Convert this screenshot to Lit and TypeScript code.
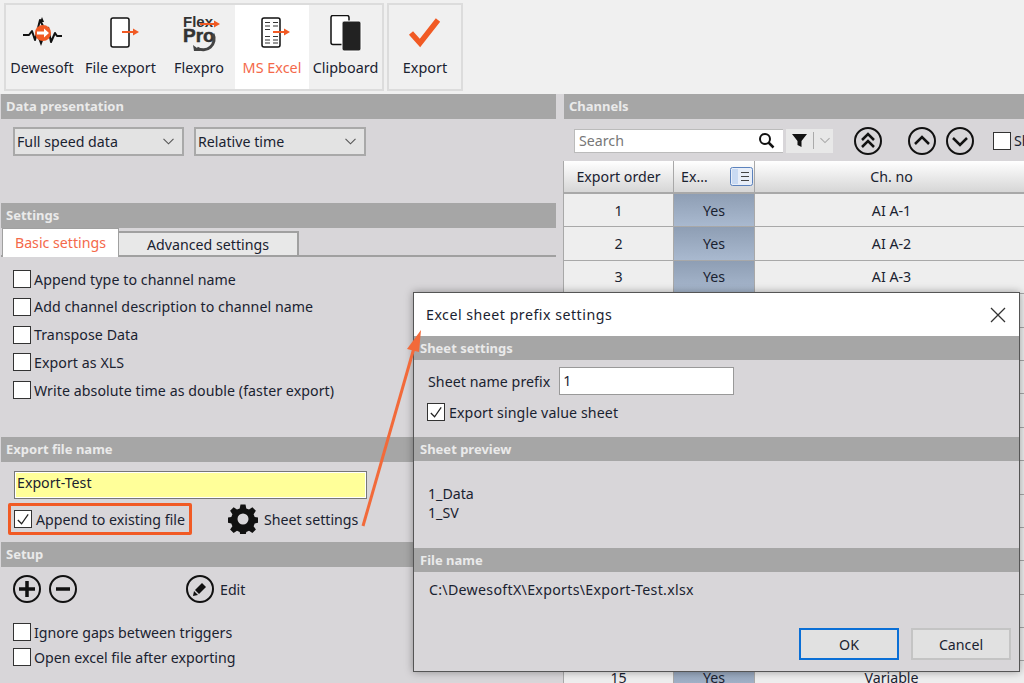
import { LitElement, html, css, svg } from "lit";
import { customElement } from "lit/decorators.js";

const orange = "#f15a24";

const arrowIcon = (x: number, y: number, len = 16) => svg`<path d="M${x} ${y}h${len - 5}" stroke="${orange}" stroke-width="2" fill="none"/><path d="M${x + len - 6} ${y - 3.5}l6 3.5l-6 3.5z" fill="${orange}"/>`;

const icons: Record<string, unknown> = {
  dewe: html`<svg width="44" height="36" viewBox="0 0 44 36"><path d="M3 19h6l3-4 3 9 5-20 4 8M28 11l3 15 4-9 2 3h5" stroke="#111" stroke-width="2" fill="none" stroke-linejoin="round"/><path d="M18 22l3 8 3-8M20 6l2-5 2 5" fill="#111"/><circle cx="23" cy="17" r="8" fill="${orange}"/><path d="M17 15.500h7v-3l5 4.500-5 4.500v-3h-7z" fill="#fff"/></svg>`,
  file: html`<svg width="44" height="36" viewBox="0 0 44 36"><rect x="12" y="2" width="18" height="29" rx="2" fill="#fff" stroke="#111" stroke-width="1.500"/>${arrowIcon(23, 16, 17)}</svg>`,
  flex: html`<svg width="44" height="40" viewBox="0 0 44 40"><text x="6" y="13" class="logo">Flex</text><text x="6" y="28" class="logo big">Pro</text><path d="M36 20a11 11 0 0 1-16 14" fill="none" stroke="#444" stroke-width="3"/><path d="M16 31l8 6h-7z" fill="#444"/>${arrowIcon(23, 10, 20)}</svg>`,
  excel: html`<svg width="44" height="36" viewBox="0 0 44 36"><rect x="12" y="2" width="18" height="29" rx="2" fill="#fff" stroke="#111" stroke-width="1.500"/><path d="M15 6.500h5M23 6.500h5M15 10h5M23 10h5M15 13.500h5M15 24h5M23 24h5M15 27h5M23 27h5M15 20.500h5M23 20.500h5" stroke="#333" stroke-width="1.200"/>${arrowIcon(23, 16, 17)}</svg>`,
  clip: html`<svg width="44" height="38" viewBox="0 0 44 38"><rect x="7" y="0.500" width="18" height="29" rx="2" fill="#fff" stroke="#111" stroke-width="1.500"/><rect x="18" y="6" width="19" height="30" rx="2" fill="#222" stroke="#fff" stroke-width="1"/></svg>`,
  check: html`<svg width="44" height="36" viewBox="0 0 44 36"><path d="M8 17l9 10L35 4" stroke="${orange}" stroke-width="5.500" fill="none"/></svg>`,
};

const circleIcon = (inner: unknown) => html`<svg class="circ" width="30" height="30" viewBox="0 0 30 30"><circle cx="15" cy="15" r="13" fill="none" stroke="#111" stroke-width="2"/>${inner}</svg>`;
const chev = (d: string) => svg`<path d="${d}" fill="none" stroke="#111" stroke-width="2.500"/>`;
const chevron = html`<svg class="chev" width="11" height="7" viewBox="0 0 11 7"><path d="M.5.800l5 5 5-5" fill="none" stroke="#555" stroke-width="1.100"/></svg>`;

const cb = (label: string, checked = false) => html`<label class="cb"><span class="box">${checked ? html`<svg width="17" height="17" viewBox="0 0 17 17"><path d="M3 9l4 4 7-10" fill="none" stroke="#222" stroke-width="1.300"/></svg>` : ""}</span><span>${label}</span></label>`;

const rows = ["AI A-1", "AI A-2", "AI A-3", "", "", "", "", "", "", "", "", "", "", "", "Variable"];

@customElement("app-root")
export class AppRoot extends LitElement {
  static styles = css`
    :host { display: block; width: 1024px; height: 683px; position: relative; overflow: hidden; background: #d8d6d9; font-family: "Noto Sans", "Open Sans", sans-serif; font-size: 14.2px; color: #1a2230; }
    * { box-sizing: border-box; }
    .toolbar { height: 94px; background: #f0f0f0; display: flex; gap: 3px; padding: 3px 0 0 4px; }
    .group { display: flex; height: 88px; border: 2px solid #dcdcdc; }
    .tool { display: flex; flex-direction: column; align-items: center; padding-top: 4px; white-space: nowrap; font-size: 14.400px; }
    .w72 { width: 72px; }
    .w85 { width: 85px; }
    .w73 { width: 73px; }
    .w74 { width: 74px; }
    .tool.on { background: #fff; color: #f4694a; }
    .tool .ic { height: 49px; display: flex; align-items: center; justify-content: center; }
    .logo { font: 700 15px "Liberation Sans", sans-serif; fill: #333; }
    .logo.big { font-size: 19px; font-weight: 700; stroke: #333; stroke-width: .5px; }
    .main { display: flex; }
    .left { width: 556px; flex: none; padding-left: 1px; }
    .right { flex: 1; margin-left: 8px; min-width: 0; }
    .head { height: 25px; background: #a6a6a6; color: #eaeaea; font-weight: 700; font-size: 13px; line-height: 25px; padding-left: 5px; white-space: nowrap; }
    .sec1 { height: 109px; }
    .sec2 { height: 234px; }
    .sec3 { height: 105px; }
    .selects { display: flex; gap: 10px; padding: 8px 0 0 12px; }
    .select { height: 29px; width: 172px; border: 2px solid #a9a9a9; background: #e3e3e3; display: flex; align-items: center; justify-content: space-between; padding: 0 8px 0 2px; }
    .select.first { width: 171px; }
    .tabs { display: flex; align-items: flex-end; height: 29px; border-bottom: 2px solid #a0a0a0; padding-left: 1px; }
    .tab { width: 117px; height: 29px; background: #fff; border: 1px solid #a0a0a0; border-bottom: 0; color: #f4694a; text-align: center; line-height: 27px; margin-bottom: -2px; }
    .tab.off { width: 180px; height: 24px; background: #e8e8e8; color: #1a2230; border: 2px solid #a0a0a0; border-left: 0; border-bottom: 0; line-height: 24px; margin-bottom: 0; }
    .checks { display: flex; flex-direction: column; gap: 9.750px; padding: 13px 0 0 12px; letter-spacing: .06px; }
    .cb { display: flex; align-items: center; gap: 3px; height: 18px; white-space: nowrap; }
    .box { width: 18px; height: 18px; flex: none; background: #fff; border: 1px solid #333; display: flex; align-items: center; justify-content: center; }
    .name { margin: 9px 0 0 13px; width: 353px; height: 28px; border: 2px solid #fff; outline: 1px solid #777; outline-offset: -1px; background: #ffff99; line-height: 20px; padding-left: 1px; }
    .name-row { display: flex; align-items: center; margin-top: 4px; padding-left: 7px; height: 32px; }
    .mark { height: 32px; width: 184px; border: 3px solid #f15a24; border-radius: 2px; display: flex; align-items: center; padding-left: 3px; }
    .mark .cb { gap: 4px; }
    .sheet { display: flex; align-items: center; gap: 6px; margin-left: 36px; }
    .setup-icons { display: flex; align-items: center; padding: 7px 0 0 11px; gap: 6px; }
    .edit { display: flex; align-items: center; gap: 5px; margin-left: 101px; }
    .setup-checks { display: flex; flex-direction: column; gap: 7px; padding: 19px 0 0 12px; }
    .search-row { display: flex; align-items: center; height: 42px; padding: 1px 0 0 10px; white-space: nowrap; }
    .search { flex: none; width: 209px; height: 24px; background: #fff; border: 1px solid #bbb; border-right: 0; display: flex; align-items: center; justify-content: space-between; padding: 0 8px 0 4px; color: #777; }
    .filter { flex: none; width: 47px; height: 24px; margin-left: 3px; background: #e8e8e8; display: flex; align-items: center; gap: 6px; padding-left: 6px; }
    .filter i { width: 1px; height: 17px; background: #aaa; }
    .nav1, .nav2, .nav3, .show { flex: none; display: flex; }
    .nav1 { margin-left: 20px; }
    .nav2 { margin-left: 24px; }
    .nav3 { margin-left: 8px; }
    .show { margin-left: 18px; }
    .tbl-wrap { background: #a8a8a8; margin: 0 -4px 0 -1px; padding-left: 1px; }
    .table { display: grid; grid-template-columns: 109px 80px 1fr; gap: 1px; }
    .th { height: 31px; margin-bottom: 1px; background: linear-gradient(#fff, #d6d6d6); display: flex; align-items: center; justify-content: center; }
    .th.ex { justify-content: space-between; padding: 0 1px 0 7px; }
    .td { height: 32.400px; background: #eee; display: flex; align-items: center; justify-content: center; }
    .td.yes { background: linear-gradient(#8e9eb4, #a9b9cf); }
    .arrow { position: absolute; left: 0; top: 0; pointer-events: none; z-index: 3; }
    .dialog { position: absolute; z-index: 2; left: 413px; top: 292px; width: 607px; height: 380px; border: 1px solid #555; background: #d8d6d9; box-shadow: 0 0 8px rgba(0,0,0,.35); font-size: 14.2px; }
    .title { height: 43px; background: #fff; display: flex; align-items: center; justify-content: space-between; padding: 0 13px 0 12px; letter-spacing: .5px; }
    .dialog .head { height: 24px; line-height: 24px; padding-left: 6px; }
    .prefix { display: flex; align-items: center; gap: 9px; padding: 7px 0 0 14px; letter-spacing: .05px; }
    .pinput { width: 175px; height: 28px; background: #fff; border: 1px solid #999; line-height: 26px; padding-left: 3px; }
    .dialog .cb { margin: 8px 0 0 13px; gap: 4px; letter-spacing: .1px; }
    .gap1 { height: 16px; }
    .preview { height: 87px; padding: 23px 0 0 14px; line-height: 19px; }
    .path { height: 56px; padding: 8px 0 0 15px; line-height: 20px; letter-spacing: .3px; }
    .btns { display: flex; justify-content: flex-end; gap: 12px; padding-right: 8px; }
    .btn { width: 100px; height: 32px; background: #e1e1e1; border: 2px solid #c4c4c4; display: flex; align-items: center; justify-content: center; }
    .btn.pri { border-color: #0a6fd6; }
  `;

  render() {
    const tool = (name: string, icon: string, cls = "") => html`<div class="tool ${cls}"><div class="ic">${icons[icon]}</div><div>${name}</div></div>`;
    return html`
      <div class="toolbar">
        <div class="group">${tool("Dewesoft", "dewe", "w72")}${tool("File export", "file", "w85")}${tool("Flexpro", "flex", "w72")}${tool("MS Excel", "excel", "w74 on")}${tool("Clipboard", "clip", "w73")}</div>
        <div class="group">${tool("Export", "check", "w72")}</div>
      </div>
      <div class="main">
        <div class="left">
          <div class="sec1"><div class="head">Data presentation</div>
            <div class="selects"><div class="select first">Full speed data${chevron}</div><div class="select">Relative time${chevron}</div></div>
          </div>
          <div class="sec2"><div class="head">Settings</div>
            <div class="tabs"><div class="tab">Basic settings</div><div class="tab off">Advanced settings</div></div>
            <div class="checks">${cb("Append type to channel name")}${cb("Add channel description to channel name")}${cb("Transpose Data")}${cb("Export as XLS")}${cb("Write absolute time as double (faster export)")}</div>
          </div>
          <div class="sec3"><div class="head">Export file name</div>
            <div class="name">Export-Test</div>
            <div class="name-row"><div class="mark">${cb("Append to existing file", true)}</div>
              <div class="sheet"><svg width="30" height="30" viewBox="0 0 30 30"><path fill="#111" fill-rule="evenodd" d="M12.500 1h5l.8 4 2.700 1.100 3.400-2.300 3.500 3.500-2.300 3.400 1.100 2.700 4 .8v5l-4 .8-1.100 2.700 2.300 3.400-3.500 3.500-3.400-2.300-2.700 1.100-.8 4h-5l-.8-4-2.700-1.100-3.400 2.300-3.500-3.500 2.300-3.400-1.100-2.700-4-.8v-5l4-.8 1.100-2.700-2.300-3.400 3.500-3.500 3.400 2.300 2.700-1.100zM15 10a5.500 5.500 0 1 0 0 11 5.500 5.500 0 0 0 0-11z" transform="translate(0 -.5)"/></svg><span>Sheet settings</span></div>
            </div>
          </div>
          <div><div class="head">Setup</div>
            <div class="setup-icons">
              ${circleIcon(svg`<path d="M7 15h16M15 7v16" stroke="#111" stroke-width="3.500"/>`)}
              ${circleIcon(svg`<path d="M8 15h14" stroke="#111" stroke-width="3.500"/>`)}
              <div class="edit">${circleIcon(svg`<path d="M10 16l7-7 4 4-7 7z" fill="#111"/><path d="M9 17l4 4-5 1z" fill="#111"/>`)}<span>Edit</span></div>
            </div>
            <div class="setup-checks">${cb("Ignore gaps between triggers")}${cb("Open excel file after exporting")}</div>
          </div>
        </div>
        <div class="right">
          <div class="head">Channels</div>
          <div class="search-row">
            <div class="search"><span>Search</span><svg width="17" height="17" viewBox="0 0 17 17"><circle cx="7" cy="7" r="5" fill="none" stroke="#111" stroke-width="2"/><path d="M10.500 10.500l5 5" stroke="#111" stroke-width="2.500"/></svg></div>
            <div class="filter"><svg width="15" height="15" viewBox="0 0 15 15"><path d="M0 1h15L9.500 8v6l-4-2V8z" fill="#111"/></svg><i></i><svg width="10" height="7" viewBox="0 0 11 7"><path d="M.5.800l5 5 5-5" fill="none" stroke="#aaa" stroke-width="1.200"/></svg></div>
            <span class="nav1">${circleIcon(chev("M9 14l6-6 6 6M9 21l6-6 6 6"))}</span>
            <span class="nav2">${circleIcon(chev("M8 18l7-7 7 7"))}</span>
            <span class="nav3">${circleIcon(chev("M8 12l7 7 7-7"))}</span>
            <span class="show">${cb("Show selected")}</span>
          </div>
          <div class="tbl-wrap"><div class="table">
            <div class="th">Export order</div>
            <div class="th ex"><span>Ex…</span><svg width="23" height="19" viewBox="0 0 23 19"><rect x=".5" y=".5" width="22" height="18" rx="2" fill="#e8eef8" stroke="#5b82bd"/><rect x="2" y="2" width="6" height="15" fill="#c9daf2"/><path d="M11 5.500h8M11 9.500h8M11 13.500h8" stroke="#444"/></svg></div>
            <div class="th">Ch. no</div>
            ${rows.map((r, i) => html`<div class="td">${r ? i + 1 : ""}</div><div class="td yes">${r ? "Yes" : ""}</div><div class="td">${r}</div>`)}
          </div></div>
        </div>
      </div>
      <div class="dialog">
        <div class="title"><span>Excel sheet prefix settings</span><svg width="16" height="16" viewBox="0 0 16 16"><path d="M1 1l14 14M15 1L1 15" stroke="#333" stroke-width="1.300"/></svg></div>
        <div class="head">Sheet settings</div>
        <div class="prefix"><span>Sheet name prefix</span><div class="pinput">1</div></div>
        ${cb("Export single value sheet", true)}
        <div class="gap1"></div>
        <div class="head">Sheet preview</div>
        <div class="preview">1_Data<br>1_SV</div>
        <div class="head">File name</div>
        <div class="path">C:\\DewesoftX\\Exports\\Export-Test.xlsx</div>
        <div class="btns"><div class="btn pri">OK</div><div class="btn">Cancel</div></div>
      </div>
      <svg class="arrow" width="1024" height="683" viewBox="0 0 1024 683"><path d="M363 526L414 348" stroke="#f26a3a" stroke-width="3" fill="none"/><path d="M421 330L407 349L419 352z" fill="#f26a3a"/></svg>
    `;
  }
}
